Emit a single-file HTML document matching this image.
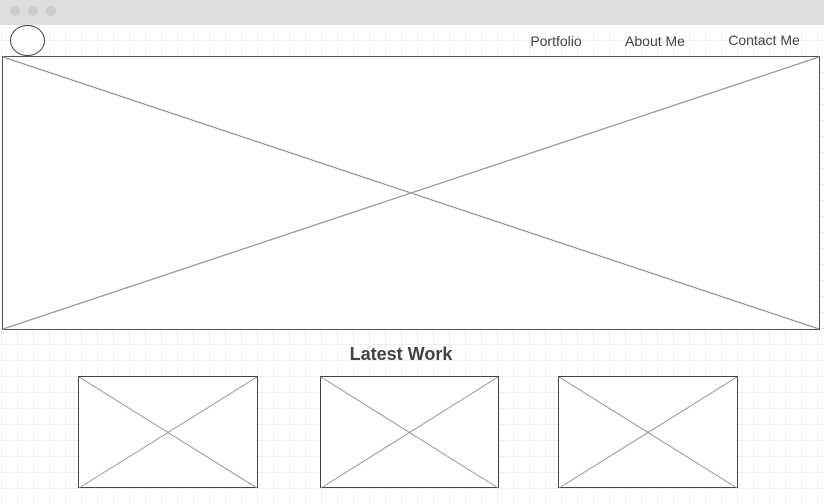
<!DOCTYPE html>
<html><head><style>
html,body{margin:0;padding:0;}
body{width:824px;height:504px;overflow:hidden;background:#fff;font-family:"Liberation Sans",sans-serif;}
</style></head><body>
<svg width="824" height="504" xmlns="http://www.w3.org/2000/svg" style="display:block">
<defs>
<pattern id="g" x="1" y="8" width="16" height="16" patternUnits="userSpaceOnUse">
<path d="M0 0.5H16M0.5 0V16" stroke="#f0f0f0" stroke-width="1" fill="none"/>
</pattern>
</defs>
<rect width="824" height="504" fill="#fff"/>
<rect y="25" width="824" height="479" fill="url(#g)"/>
<rect width="824" height="25" fill="#dddddd"/>
<circle cx="15" cy="11" r="5" fill="#cccccc"/>
<circle cx="33" cy="11" r="5" fill="#cccccc"/>
<circle cx="51" cy="11" r="5" fill="#cccccc"/>
<ellipse cx="27.5" cy="40.5" rx="17" ry="15" fill="#fff" stroke="#444" stroke-width="1"/>
<text x="556" y="46" font-size="14" fill="#444" text-anchor="middle">Portfolio</text>
<text x="655" y="46" font-size="14" fill="#444" text-anchor="middle">About Me</text>
<text x="764" y="45" font-size="14" fill="#444" text-anchor="middle">Contact Me</text>
<rect x="2.5" y="56.5" width="817" height="273" fill="#fff" stroke="#555" stroke-width="1"/>
<path d="M3 57L819 329M819 57L3 329" stroke="#999" stroke-width="1.3"/>
<text x="401" y="360" font-size="18" font-weight="bold" fill="#444" text-anchor="middle">Latest Work</text>
<g stroke-width="1">
<rect x="78.5" y="376.5" width="179" height="111" fill="#fff" stroke="#444"/>
<path d="M79 377L257 488M257 377L79 488" stroke="#999"/>
<rect x="320.5" y="376.5" width="178" height="111" fill="#fff" stroke="#444"/>
<path d="M321 377L498 488M498 377L321 488" stroke="#999"/>
<rect x="558.5" y="376.5" width="179" height="111" fill="#fff" stroke="#444"/>
<path d="M559 377L737 488M737 377L559 488" stroke="#999"/>
</g>
</svg>
</body></html>
